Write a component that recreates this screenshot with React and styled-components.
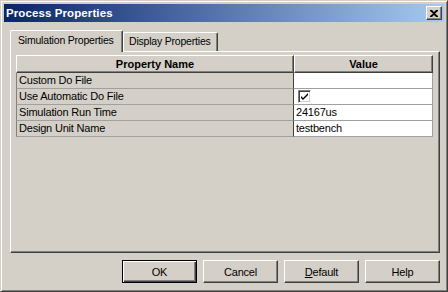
import { Fragment } from "react"
import styled, { createGlobalStyle } from "styled-components"

const Global = createGlobalStyle`
  html, body { margin:0; padding:0; background:#d4d0c8; }
  * { box-sizing:border-box; }
`

const Window = styled.div`
  width:448px;
  height:292px;
  background:#d4d0c8;
  border:1px solid;
  border-color:#d4d0c8 #404040 #404040 #d4d0c8;
  box-shadow: inset 1px 1px #fff, inset -1px -1px #808080;
  padding:3px;
  display:flex;
  flex-direction:column;
  font-family:"Liberation Sans", Arial, sans-serif;
  font-size:11px;
  letter-spacing:-0.2px;
  color:#000;
`
const TitleBar = styled.div`
  height:18px;
  display:flex;
  align-items:center;
  justify-content:space-between;
  padding:0 2px 0 2px;
  background:linear-gradient(to right, #0a246a, #a6caf0);
`
const Title = styled.span`
  color:#fff;
  font-weight:bold;
  font-size:11.5px;
  letter-spacing:0.1px;
`
const CloseBtn = styled.div`
  width:16px;
  height:14px;
  background:#d4d0c8;
  border:1px solid;
  border-color:#fff #404040 #404040 #fff;
  box-shadow: inset -1px -1px #808080;
  display:flex;
  align-items:center;
  justify-content:center;
`
const Body = styled.div`
  flex:1;
  display:flex;
  flex-direction:column;
  padding:8px 4px 0 6px;
`
const TabStrip = styled.div`
  display:flex;
  align-items:flex-end;
  height:21px;
`
const Tab = styled.div`
  position:relative;
  z-index:${p => p.$active ? 1 : 0};
  height:${p => p.$active ? "22px" : "19px"};
  margin-bottom:${p => p.$active ? "-1px" : "0"};
  width:${p => p.$w}px;
  padding:${p => p.$active ? "3px 0 0 7px" : "2px 0 0 5px"};
  font-size:10.5px;
  white-space:nowrap;
  overflow:hidden;
  background:#d4d0c8;
  border-top:1px solid #fff;
  border-left:1px solid #fff;
  border-right:1px solid #404040;
  box-shadow: inset -1px 0 #808080;
  border-radius:2px 2px 0 0;
`
const Panel = styled.div`
  height:202px;
  border:1px solid;
  border-color:#fff #404040 #404040 #fff;
  box-shadow: inset -1px -1px #808080;
  padding:3px 0 0 5px;
`
const Grid = styled.div`
  width:417px;
  display:grid;
  grid-template-columns:278px 139px;
  grid-template-rows:18px;
  grid-auto-rows:16px;
`
const HeadCell = styled.div`
  display:flex;
  align-items:center;
  justify-content:center;
  font-weight:bold;
  letter-spacing:0;
  background:#d4d0c8;
  border:1px solid;
  border-color:#fff #404040 #404040 #fff;
  box-shadow: inset -1px -1px #808080;
`
const NameCell = styled.div`
  background:#d4d0c8;
  border-bottom:1px solid #a0a0a0;
  border-left:1px solid #808080;
  border-right:1px solid #404040;
  padding-left:2px;
  line-height:15px;
  white-space:nowrap;
`
const ValueCell = styled.div`
  background:#fff;
  border-bottom:1px solid #a0a0a0;
  border-right:1px solid #a0a0a0;
  padding-left:2px;
  line-height:15px;
  display:flex;
  align-items:center;
`
const Check = styled.div`
  width:13px;
  height:13px;
  margin-left:2px;
  background:#fff;
  border:1px solid;
  border-color:#808080 #fff #fff #808080;
  box-shadow: inset 1px 1px #404040, inset -1px -1px #d4d0c8;
  display:flex;
  align-items:center;
  justify-content:center;
`
const ButtonRow = styled.div`
  display:flex;
  justify-content:flex-end;
  gap:6px;
  margin-top:7px;
`
const Button = styled.div`
  width:75px;
  height:23px;
  display:flex;
  align-items:center;
  justify-content:center;
  background:#d4d0c8;
  border:1px solid;
  border-color:${p => p.$default ? "#000" : "#fff #404040 #404040 #fff"};
  box-shadow:${p => p.$default
    ? "inset 1px 1px #fff, inset -1px -1px #404040, inset -2px -2px #808080"
    : "inset -1px -1px #808080"};
`
const U = styled.span`
  text-decoration:underline;
`

const rows = [
  ["Custom Do File", ""],
  ["Use Automatic Do File", "check"],
  ["Simulation Run Time", "24167us"],
  ["Design Unit Name", "testbench"],
]

const App = () => {
  return (
    <Window>
      <Global />
      <TitleBar>
        <Title>Process Properties</Title>
        <CloseBtn>
          <svg width="8" height="7" viewBox="0 0 8 7">
            <path d="M0 0h2l2 2 2-2h2v1L5 3.5 8 6v1H6L4 5 2 7H0V6l3-2.5L0 1z" fill="#000" />
          </svg>
        </CloseBtn>
      </TitleBar>
      <Body>
        <TabStrip>
          <Tab $active $w={113}>Simulation Properties</Tab>
          <Tab $w={95}>Display Properties</Tab>
        </TabStrip>
        <Panel>
          <Grid>
            <HeadCell>Property Name</HeadCell>
            <HeadCell>Value</HeadCell>
            {rows.map(([name, value]) => (
              <Fragment key={name}>
                <NameCell>{name}</NameCell>
                <ValueCell>
                  {value === "check" ? (
                    <Check>
                      <svg width="7" height="7" viewBox="0 0 7 7">
                        <path d="M0 2l2 2 5-5v2L2 6 0 4z" fill="#000" transform="translate(0 1)" />
                      </svg>
                    </Check>
                  ) : value}
                </ValueCell>
              </Fragment>
            ))}
          </Grid>
        </Panel>
        <ButtonRow>
          <Button $default>OK</Button>
          <Button>Cancel</Button>
          <Button><span><U>D</U>efault</span></Button>
          <Button>Help</Button>
        </ButtonRow>
      </Body>
    </Window>
  )
}

export default App
